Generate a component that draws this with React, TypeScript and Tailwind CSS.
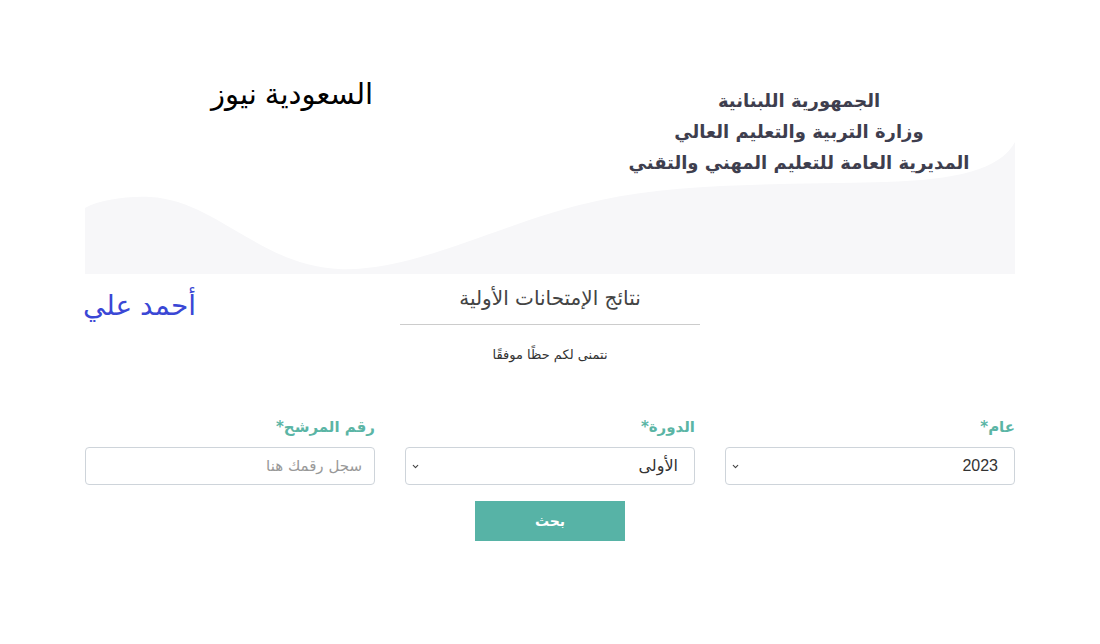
import { ChevronDown } from 'lucide-react';

const ar = { fontFamily: '"DejaVu Sans", "Noto Sans", sans-serif' };

function Field({ label, children }: { label: string; children: React.ReactNode }) {
  return (
    <div className="flex flex-col gap-[10px]">
      <label className="text-[15px] font-bold text-[#5bb5a5] leading-[20px]">{label}*</label>
      {children}
    </div>
  );
}

function Select({ value, options }: { value: string; options: string[] }) {
  return (
    <div className="relative">
      <select
        defaultValue={value}
        className="w-full h-[38px] appearance-none bg-white border border-[#ced4da] rounded-[4px] pr-[16px] pl-[28px] text-[16px] text-[#333] outline-none"
        style={{ fontFamily: '"Liberation Sans", "DejaVu Sans", sans-serif' }}
      >
        {options.map((o) => (
          <option key={o}>{o}</option>
        ))}
      </select>
      {/* chevron sits on the left because the form is rtl */}
      <ChevronDown className="absolute left-[6px] top-[15px] w-[9px] h-[9px] text-[#444] pointer-events-none" strokeWidth={3} />
    </div>
  );
}

export default function App() {
  return (
    <div dir="rtl" className="min-h-[644px] bg-white pt-[60px]" style={ar}>
      <div className="w-[930px] mx-auto">
        {/* header with the soft grey wave behind it */}
        <div className="relative h-[214px]">
          <svg className="absolute inset-0 w-full h-full" viewBox="0 0 930 214" preserveAspectRatio="none">
            <path
              d="M0,148 C15,140 40,136 65,137 C130,140 175,205 253,209 C330,213 420,160 516,140 C600,122 700,125 800,122 C870,120 915,110 930,82 L930,214 L0,214 Z"
              fill="#f7f7f9"
            />
          </svg>
          <div className="relative flex justify-start pt-[25px] pr-[16px]">
            <div className="w-[400px] text-center text-[18px] font-bold leading-[31px] text-[#3e3e4e]">
              <div>الجمهورية اللبنانية</div>
              <div>وزارة التربية والتعليم العالي</div>
              <div>المديرية العامة للتعليم المهني والتقني</div>
            </div>
          </div>
          <div
            className="absolute top-[14px] left-[126px] text-[29px] text-black leading-[40px]"
            style={{ fontFamily: '"Liberation Sans", "DejaVu Sans", sans-serif' }}
          >
            السعودية نيوز
          </div>
        </div>

        <div className="relative">
          <div
            className="absolute top-[12px] left-[-2px] text-[28px] text-[#3a47d5] leading-[40px]"
            style={{ fontFamily: '"Liberation Sans", "DejaVu Sans", sans-serif' }}
          >
            أحمد علي
          </div>
          <div className="flex flex-col items-center">
            <div className="w-[300px] border-b border-[#cccccc] pt-[10px] pb-[12px] text-center text-[20px] leading-[28px] text-[#444]">
              نتائج الإمتحانات الأولية
            </div>
            <div className="mt-[20px] text-[13px] leading-[20px] text-[#333]">نتمنى لكم حظًا موفقًا</div>
          </div>
        </div>

        <div className="grid grid-cols-3 gap-[30px] mt-[52px]">
          <Field label="عام">
            <Select value="2023" options={['2023', '2022', '2021']} />
          </Field>
          <Field label="الدورة">
            <Select value="الأولى" options={['الأولى', 'الثانية']} />
          </Field>
          <Field label="رقم المرشح">
            <input
              placeholder="سجل رقمك هنا"
              className="w-full h-[38px] bg-white border border-[#ced4da] rounded-[4px] px-[12px] text-[15px] text-[#333] placeholder:text-[#999] outline-none"
            />
          </Field>
        </div>

        <div className="flex justify-center mt-[16px]">
          <button className="w-[150px] h-[40px] bg-[#57b3a6] text-white text-[14px] font-bold">بحث</button>
        </div>
      </div>
    </div>
  );
}
